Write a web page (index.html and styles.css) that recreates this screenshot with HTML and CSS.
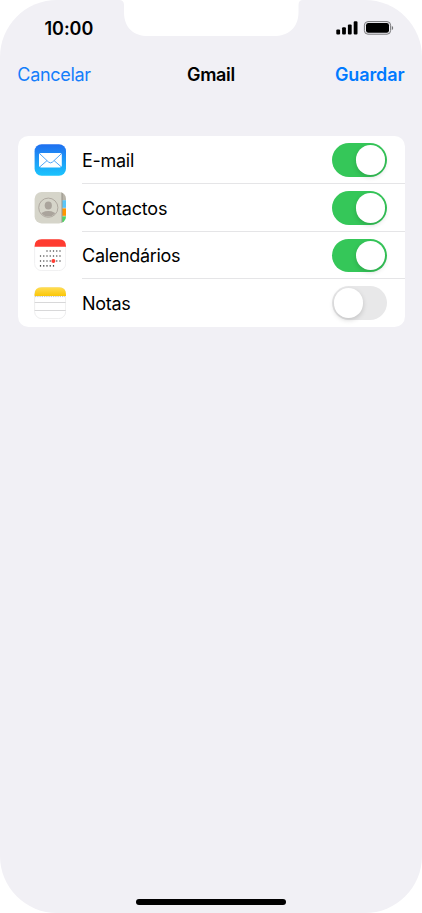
FILE: index.html
```html
<!DOCTYPE html>
<html lang="pt">
<head>
<meta charset="utf-8">
<title>Gmail</title>
<link rel="stylesheet" href="styles.css">
</head>
<body>
<main class="phone">
  <svg class="notch" viewBox="0 0 184 36" aria-hidden="true"><path d="M0 0H184Q179.500 0 179.500 5V12C179.500 28 169 36 155 36H29C15 36 5 28 5 12V5Q5 0 0 0Z"/></svg>
  <header class="status">
    <span class="time">10:00</span>
    <svg class="indicators" viewBox="0 0 58 14" aria-hidden="true">
      <rect x="0.3" y="8.4" width="3.8" height="5.2" rx="1.1"/>
      <rect x="6.1" y="6.2" width="3.8" height="7.4" rx="1.1"/>
      <rect x="11.9" y="3.5" width="3.8" height="10.1" rx="1.1"/>
      <rect x="17.7" y="0.3" width="3.8" height="13.3" rx="1.1"/>
      <rect class="battery" x="28.4" y="0.6" width="26.2" height="12.6" rx="3.6"/>
      <rect x="30" y="2" width="23" height="9.8" rx="2.3"/>
      <path class="tip" d="M55.800 5C57.600 5.500 57.600 8.500 55.800 9Z"/>
    </svg>
  </header>
  <nav class="nav">
    <a class="cancel">Cancelar</a>
    <h1 class="title">Gmail</h1>
    <a class="save">Guardar</a>
  </nav>
  <section class="card">
    <div class="row">
      <svg class="icon" viewBox="0 0 32 32" aria-hidden="true">
        <defs><linearGradient id="mail" x2="0" y2="1"><stop stop-color="#1f6ff0"/><stop offset="1" stop-color="#1bc4fd"/></linearGradient></defs>
        <rect x=".6" y=".3" width="31.4" height="31.4" rx="7" fill="url(#mail)"/>
        <rect x="5" y="9" width="22.8" height="14.4" rx="1.8" fill="#fff"/>
        <path d="M5.800 9.800L14.500 18Q16.500 19.800 18.500 18L27.300 9.800M5.900 22.800L13 16.600M27.200 22.800L20.100 16.600" fill="none" stroke="#3f9cf5" stroke-width=".9"/>
      </svg>
      <div class="line"><span class="label mail">E-mail</span><span class="toggle on"></span></div>
    </div>
    <div class="row">
      <svg class="icon" viewBox="0 0 32 32" aria-hidden="true">
        <defs><clipPath id="tile"><rect x=".6" y="0" width="31.4" height="31.4" rx="7"/></clipPath><clipPath id="face"><circle cx="14.3" cy="15.7" r="8.9"/></clipPath></defs>
        <g clip-path="url(#tile)">
          <path fill="#d6d5ca" d="M0 0H32V32H0Z"/>
          <path fill="#b9b5aa" d="M27.800 0H32V8H27.800Z"/>
          <path fill="#5bc5f8" d="M28.200 8.300H32V15.700H28.200Z"/>
          <path fill="#ff9500" d="M28.200 16.400H32V23.700H28.200Z"/>
          <path fill="#4cd964" d="M28.200 24.400H32V32H28.200Z"/>
          <path fill="none" stroke="#8b897f" stroke-width=".8" d="M28 0V32"/>
        </g>
        <circle cx="14.3" cy="15.7" r="9.6" fill="none" stroke="#aaa49c" stroke-width=".9"/>
        <g clip-path="url(#face)" fill="#aaa49c"><ellipse cx="14.3" cy="13.5" rx="3.6" ry="4"/><ellipse cx="14.3" cy="23.7" rx="8.2" ry="4.7"/></g>
      </svg>
      <div class="line"><span class="label contacts">Contactos</span><span class="toggle on"></span></div>
    </div>
    <div class="row">
      <svg class="icon" viewBox="0 0 32 32" aria-hidden="true">
        <rect x=".6" y=".4" width="31.1" height="31.2" rx="7" fill="#fff" stroke="#e9e9eb" stroke-width=".7"/>
        <path fill="#ff3b30" d="M.6 7.800V7.300Q.6.3 7.600.3H25Q32 .3 32 7.300V7.800Z"/>
        <g fill="none" stroke="#111" stroke-width="1.2" stroke-dasharray="1.2 2.05">
          <path d="M12.400 12H27.700M5.900 17H27.700M5.900 22H27.700M5.900 26.900H20.300"/>
        </g>
        <circle cx="19.4" cy="22" r="2" fill="#ff3b30"/>
      </svg>
      <div class="line"><span class="label calendars">Calendários</span><span class="toggle on"></span></div>
    </div>
    <div class="row">
      <svg class="icon" viewBox="0 0 32 32" aria-hidden="true">
        <defs><linearGradient id="notes" x2="0" y2="1"><stop stop-color="#ffdd55"/><stop offset="1" stop-color="#fbc707"/></linearGradient></defs>
        <rect x=".6" y=".4" width="31.1" height="31.2" rx="7" fill="#fff" stroke="#e5e5e6" stroke-width=".7"/>
        <path fill="url(#notes)" d="M.6 8.900V7.300Q.6.3 7.600.3H25Q32 .3 32 7.300V8.900Z"/>
        <path d="M1 9.600H31.600" stroke="#a5a5a5" stroke-width=".8" stroke-dasharray=".8 1"/>
        <path d="M.7 15.500H31.700M.7 23.500H31.700" stroke="#d4d4d5" stroke-width=".9"/>
      </svg>
      <div class="line"><span class="label notes">Notas</span><span class="toggle"></span></div>
    </div>
  </section>
  <div class="home"></div>
</main>
</body>
</html>
```
FILE: styles.css
```css
* { box-sizing: border-box; }
body { margin: 0; background: #fff; color: #000; font: 18px/22px Inter, "Liberation Sans", sans-serif; }
.phone { position: relative; display: flex; flex-direction: column; width: 422px; height: 913px; background: #f1f0f5; border-radius: 57px; overflow: hidden; }
.notch { position: absolute; left: 119px; top: 0; width: 184px; height: 36px; fill: #fff; }
.status { display: flex; justify-content: space-between; align-items: flex-start; height: 56px; padding: 18px 28px 0 44.5px; }
.time { font-weight: 600; letter-spacing: -.05px; }
.indicators { width: 58px; height: 14px; margin-top: 3px; }
.battery { fill: none; stroke: #77777a; stroke-width: 1; }
.tip { fill: #77777a; }
.nav { display: grid; grid-template-columns: 1fr auto 1fr; align-items: center; height: 38px; padding: 0 17.5px 0 17.3px; }
.cancel { color: #147efb; letter-spacing: -.3px; }
.title { margin: 0; font-size: 18px; line-height: 22px; font-weight: 600; letter-spacing: -.35px; }
.save { color: #007aff; font-weight: 600; justify-self: end; letter-spacing: -.1px; }
.card { margin: 42.4px 17.3px 0 17.5px; height: 190.3px; background: #fff; border-radius: 10.5px; }
.row { display: flex; align-items: center; height: 47.6px; padding-left: 16.6px; }
.icon { flex: none; width: 32px; height: 32px; margin-right: 16px; }
.line { display: flex; flex: 1; align-items: center; justify-content: space-between; height: 100%; padding: 1px 17.3px 0 0; border-bottom: 1px solid #e5e5e7; }
.row:last-child .line { border-bottom-color: transparent; }
.label { padding-top: 2px; letter-spacing: -.3px; }
.contacts { letter-spacing: -.2px; }
.calendars { letter-spacing: -.33px; }
.toggle { display: flex; align-items: center; width: 55.5px; height: 33.5px; padding: 0 2px; border-radius: 17px; background: #e8e8e9; }
.toggle::after { content: ""; width: 29.5px; height: 29.5px; border-radius: 50%; background: #fff; box-shadow: 0 2px 5px rgba(0, 0, 0, .16); }
.toggle.on { justify-content: flex-end; background: #35c759; }
.home { width: 150px; height: 5.5px; margin: auto auto 8.5px; border-radius: 3px; background: #000; }
```
